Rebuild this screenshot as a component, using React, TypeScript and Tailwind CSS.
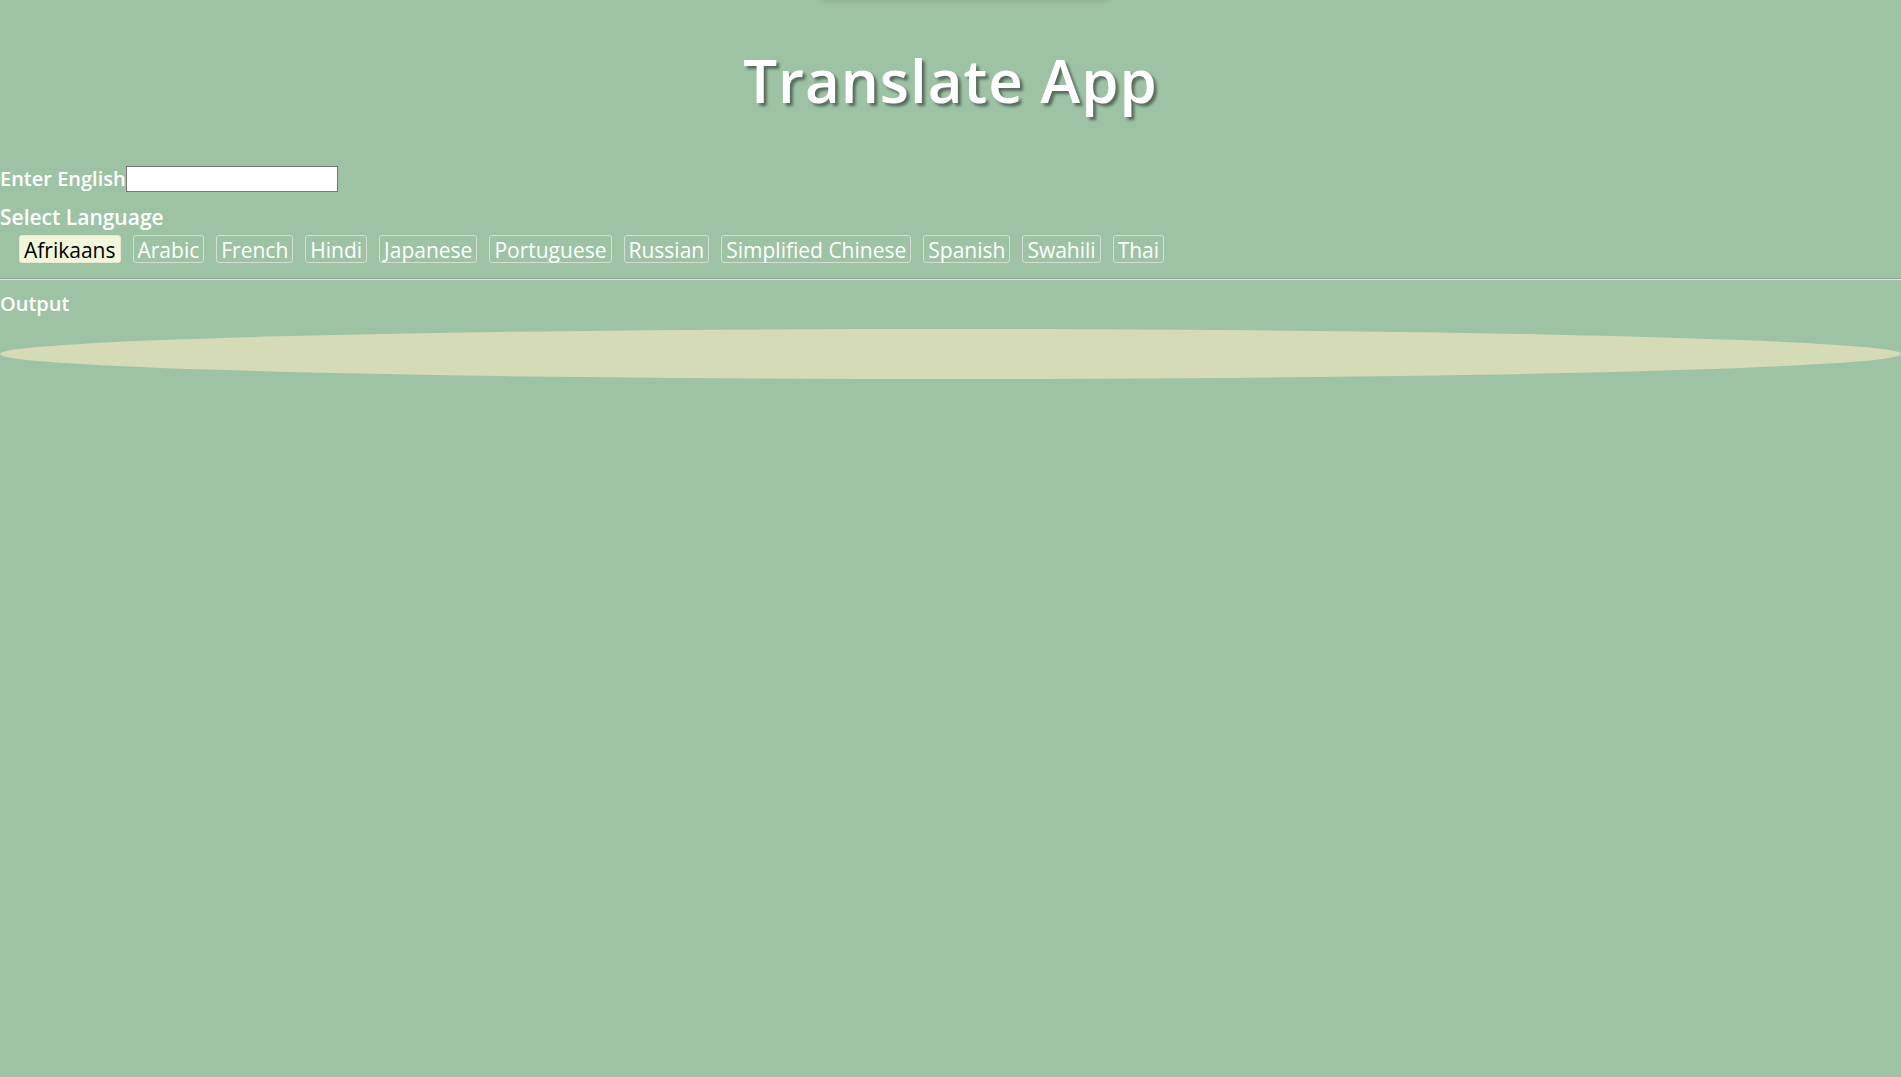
import React, { useState } from "react";

const langs = [
  "Afrikaans",
  "Arabic",
  "French",
  "Hindi",
  "Japanese",
  "Portuguese",
  "Russian",
  "Simplified Chinese",
  "Spanish",
  "Swahili",
  "Thai",
];

export default function App() {
  const [sel, setSel] = useState("Afrikaans");
  const [text, setText] = useState("");
  return (
    <div
      className="min-h-[1077px] w-full bg-[#9ec3a4] text-white relative"
      style={{ fontFamily: "'Open Sans', Lato, sans-serif" }}
    >
      <div className="absolute left-[820px] top-[-6px] h-[6px] w-[290px] rounded-full shadow-[0_0_6px_rgba(0,0,0,0.15)]" />
      <h1 className="pt-[40px] text-center text-[60px] font-semibold leading-[80px] tracking-[1px] [text-shadow:3px_3px_3px_rgba(0,0,0,0.45)]">
        Translate App
      </h1>
      <div className="mt-[45px] flex items-center h-[28px]">
        <label className="text-[20px] font-semibold leading-[28px]">Enter English</label>
        <input
          value={text}
          onChange={(e) => setText(e.target.value)}
          className="h-[26px] w-[212px] border border-[#767676] bg-white text-black outline-none px-1"
        />
      </div>
      <div className="mt-[10px] text-[21px] font-semibold leading-[28px]">Select Language</div>
      <div className="mt-[3px] flex items-center gap-[12px] pl-[19px] h-[30px]">
        {langs.map((l) => (
          <button
            key={l}
            onClick={() => setSel(l)}
            className={
              "h-[28px] rounded-[3px] border px-[4px] pt-[1px] text-[21px] leading-[26px] " +
              (sel === l
                ? "border-[#e6ebd0] bg-[#f2f7dc] text-black"
                : "border-[#d6dcd6] bg-transparent text-white")
            }
          >
            {l}
          </button>
        ))}
      </div>
      <div className="mt-[14px] h-[2px] w-full border-t border-[#8e9a90] bg-[#e4e7e4]" />
      <div className="mt-[10px] text-[20px] font-semibold leading-[28px]">Output</div>
      <div className="mt-[11px] h-[50px] w-full rounded-[50%] bg-[#d4dbb6]" />
    </div>
  );
}
